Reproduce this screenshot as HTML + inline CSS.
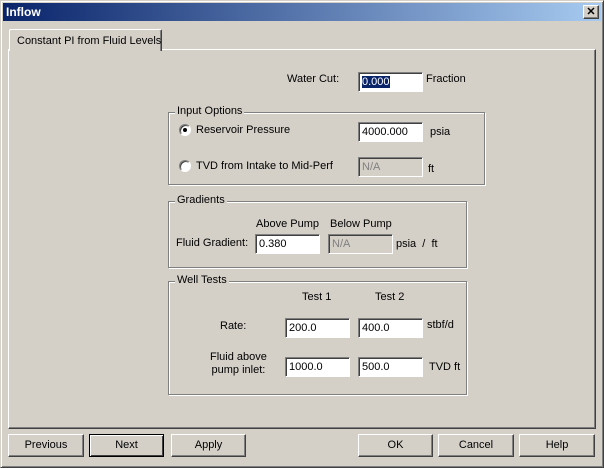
<!DOCTYPE html>
<html><head><meta charset="utf-8"><style>
*{box-sizing:border-box;margin:0;padding:0}
body{width:604px;height:468px;background:#d4d0c8;font-family:"Liberation Sans",sans-serif;font-size:11px;color:#000;position:relative;overflow:hidden}
.a{position:absolute;white-space:nowrap}
.win{position:absolute;left:0;top:0;width:604px;height:468px;border:1px solid;border-color:#d4d0c8 #404040 #404040 #d4d0c8;box-shadow:inset 1px 1px 0 #fff,inset -1px -1px 0 #808080}
.title{position:absolute;left:3px;top:3px;width:598px;height:18px;background:linear-gradient(90deg,#0a246a,#a6caf0);color:#fff;font-weight:bold;font-size:12px;line-height:18px;padding-left:3px}
.close{position:absolute;left:583px;top:5px;width:16px;height:14px;background:#d4d0c8;border:1px solid;border-color:#fff #404040 #404040 #fff;box-shadow:inset -1px -1px 0 #808080;font-size:11px;font-weight:bold;line-height:12px;text-align:center}
.panel{position:absolute;left:8px;top:49px;width:588px;height:380px;border:1px solid;border-color:#fff #404040 #404040 #fff;box-shadow:inset -1px -1px 0 #808080}
.tab{position:absolute;left:9px;top:29px;width:153px;height:22px;background:#d4d0c8;border:1px solid;border-bottom:none;border-color:#fff #404040 #404040 #fff;border-radius:2px 2px 0 0;box-shadow:inset -1px 0 0 #808080;padding:5px 0 0 7px;white-space:nowrap}
.inp{position:absolute;height:20px;background:#fff;border:1px solid;border-color:#808080 #fff #fff #808080;box-shadow:inset 1px 1px 0 #404040;padding:3px 0 0 3px;font-size:11px;white-space:nowrap}
.dis{background:#d4d0c8;color:#808080}
.grp{position:absolute;border:1px solid #808080;box-shadow:1px 1px 0 #fff,inset 1px 1px 0 #fff}
.grp span{position:absolute;left:6px;top:-8px;background:#d4d0c8;padding:0 2px;font-size:11px;white-space:nowrap}
.rad{position:absolute;width:12px;height:12px;border-radius:50%;background:#fff;border:1px solid;border-color:#808080 #fff #fff #808080;box-shadow:inset 1px 1px 0 #404040}
.btn{position:absolute;top:434px;height:23px;border:1px solid;border-color:#fff #404040 #404040 #fff;box-shadow:inset -1px -1px 0 #808080;text-align:center;line-height:21px;font-size:11px}
.t{font-size:11px}
</style></head><body>
<div class="win"></div>
<div class="title">Inflow</div>
<div class="close">✕</div>
<div class="panel"></div>
<div class="tab t">Constant PI from Fluid Levels</div>

<div class="a t" style="left:287px;top:73px">Water Cut:</div>
<div class="inp" style="left:358px;top:72px;width:65px"><span style="background:#0a246a;color:#fff">0.000</span></div>
<div class="a t" style="left:426px;top:73px">Fraction</div>

<div class="grp" style="left:168px;top:112px;width:317px;height:73px"><span>Input Options</span></div>
<div class="rad" style="left:179px;top:124px"><div style="position:absolute;left:3px;top:3px;width:4px;height:4px;border-radius:50%;background:#000"></div></div>
<div class="a t" style="left:196px;top:124px">Reservoir Pressure</div>
<div class="inp" style="left:358px;top:122px;width:65px">4000.000</div>
<div class="a t" style="left:430px;top:126px">psia</div>
<div class="rad" style="left:179px;top:160px"></div>
<div class="a t" style="left:196px;top:160px">TVD from Intake to Mid-Perf</div>
<div class="inp dis" style="left:358px;top:157px;width:65px">N/A</div>
<div class="a t" style="left:428px;top:163px">ft</div>

<div class="grp" style="left:168px;top:201px;width:299px;height:67px"><span>Gradients</span></div>
<div class="a t" style="left:256px;top:218px">Above Pump</div>
<div class="a t" style="left:330px;top:218px">Below Pump</div>
<div class="a t" style="left:176px;top:237px">Fluid Gradient:</div>
<div class="inp" style="left:255px;top:234px;width:65px">0.380</div>
<div class="inp dis" style="left:328px;top:234px;width:65px">N/A</div>
<div class="a t" style="left:396px;top:238px">psia &nbsp;/ &nbsp;ft</div>

<div class="grp" style="left:168px;top:281px;width:299px;height:114px"><span>Well Tests</span></div>
<div class="a t" style="left:302px;top:291px">Test 1</div>
<div class="a t" style="left:375px;top:291px">Test 2</div>
<div class="a t" style="left:220px;top:320px">Rate:</div>
<div class="inp" style="left:285px;top:318px;width:65px">200.0</div>
<div class="inp" style="left:358px;top:318px;width:65px">400.0</div>
<div class="a t" style="left:427px;top:319px">stbf/d</div>
<div class="a t" style="left:210px;top:351px;text-align:center;line-height:13px">Fluid above<br>pump inlet:</div>
<div class="inp" style="left:285px;top:357px;width:65px">1000.0</div>
<div class="inp" style="left:358px;top:357px;width:65px">500.0</div>
<div class="a t" style="left:429px;top:361px">TVD ft</div>

<div class="btn" style="left:8px;width:76px">Previous</div>
<div class="btn" style="left:89px;width:75px;border:1px solid #000;box-shadow:inset 1px 1px 0 #fff,inset -1px -1px 0 #404040">Next</div>
<div class="btn" style="left:171px;width:75px">Apply</div>
<div class="btn" style="left:358px;width:75px">OK</div>
<div class="btn" style="left:438px;width:76px">Cancel</div>
<div class="btn" style="left:519px;width:76px">Help</div>
</body></html>
